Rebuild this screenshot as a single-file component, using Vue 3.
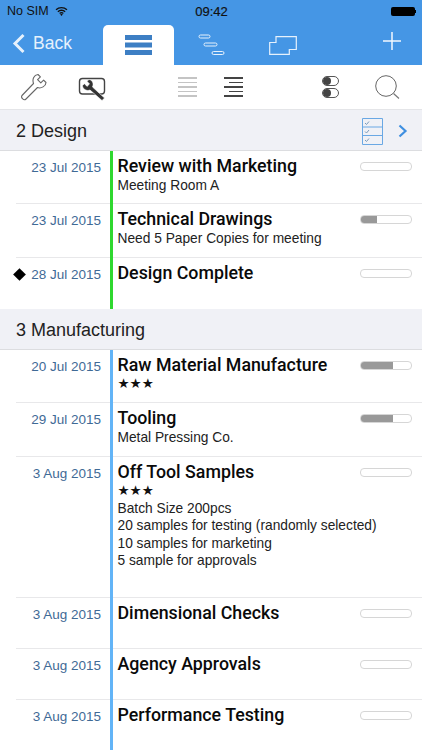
<script setup>
// 섹션별 작업 목록
const sections = [
  {
    title: '2 Design',
    color: 'green',
    showTools: true,
    tasks: [
      { date: '23 Jul 2015', name: 'Review with Marketing', lines: ['Meeting Room A'], progress: 0, height: 53 },
      { date: '23 Jul 2015', name: 'Technical Drawings', lines: ['Need 5 Paper Copies for meeting'], progress: 32, height: 54 },
      { date: '28 Jul 2015', name: 'Design Complete', lines: [], progress: 0, height: 51, milestone: true },
    ],
  },
  {
    title: '3 Manufacturing',
    color: 'blue',
    tasks: [
      { date: '20 Jul 2015', name: 'Raw Material Manufacture', stars: true, lines: [], progress: 63, height: 53 },
      { date: '29 Jul 2015', name: 'Tooling', lines: ['Metal Pressing Co.'], progress: 63, height: 54 },
      {
        date: '3 Aug 2015',
        name: 'Off Tool Samples',
        stars: true,
        lines: ['Batch Size 200pcs', '20 samples for testing (randomly selected)', '10 samples for marketing', '5 sample for approvals'],
        progress: 0,
        height: 141,
      },
      { date: '3 Aug 2015', name: 'Dimensional Checks', lines: [], progress: 0, height: 51 },
      { date: '3 Aug 2015', name: 'Agency Approvals', lines: [], progress: 0, height: 51 },
      { date: '3 Aug 2015', name: 'Performance Testing', lines: [], progress: 0, height: 51 },
    ],
  },
];
</script>

<template>
  <div class="screen">
    <header class="top">
      <div class="status">
        <div class="status-left">
          <span>No SIM</span>
          <svg width="13" height="10" viewBox="0 0 14 11">
            <path d="M1 4.2a8.5 8.5 0 0 1 12 0M3 6.3a5.600 5.600 0 0 1 8 0M5 8.200a2.800 2.800 0 0 1 4 0" fill="none" stroke="#111" stroke-width="1.500" />
            <path d="M7 11 5.600 9.300a2 2 0 0 1 2.800 0z" fill="#111" />
          </svg>
        </div>
        <span class="time">09:42</span>
        <div class="battery"><i></i><b></b></div>
      </div>

      <nav class="nav">
        <div class="back">
          <svg width="14" height="21" viewBox="0 0 14 21">
            <path d="M11.500 2 3 10.500l8.500 8.500" fill="none" stroke="#e6f1fc" stroke-width="3" />
          </svg>
          <span>Back</span>
        </div>
        <div class="tab">
          <svg width="27" height="20" viewBox="0 0 27 20">
            <path d="M0 0h27v5H0zM0 7.500h27v5H0zM0 15h27v5H0z" fill="#3d7fc4" />
          </svg>
        </div>
        <div class="nav-icon gantt">
          <svg width="28" height="22" viewBox="0 0 28 22">
            <g fill="none" stroke="#e6f1fc" stroke-width="1">
              <rect x="1" y="1" width="11" height="3" rx="1.500" />
              <rect x="6" y="9" width="13" height="3" rx="1.500" />
              <rect x="14" y="17.500" width="12" height="3" rx="1.500" />
            </g>
          </svg>
        </div>
        <div class="nav-icon cards">
          <svg width="28" height="19" viewBox="0 0 28 19">
            <path d="M.7 6.500h6.300V.7h20.300v12.800h-7v4.800H.7z" fill="none" stroke="#e6f1fc" stroke-width="1.200" />
          </svg>
        </div>
        <div class="plus">
          <svg width="18" height="18" viewBox="0 0 18 18">
            <path d="M9 0v18M0 9h18" stroke="#f2f8fe" stroke-width="1.500" />
          </svg>
        </div>
      </nav>
    </header>

    <div class="toolbar">
      <svg class="wrench" width="28" height="28" viewBox="0 0 28 28">
        <path d="M18 1.500 20.400 3.900 17.600 6.700 20.800 9.900 23.600 7.100 26 9.500C26 13 21 16 17.500 14.500L6 26C4 28 .5 25 2 22.500L13.500 10.500C12 6 14 2 18 1.500z" fill="#fff" stroke="#666" stroke-width="1.100" stroke-linejoin="round" />
      </svg>
      <svg class="wrench-box" width="28" height="24" viewBox="0 0 28 24">
        <rect x="1.500" y="1.500" width="25" height="15.500" rx="3" fill="#fff" stroke="#444" stroke-width="1.400" />
        <path d="M11 2.500 9 4.300 11.500 7 9 9.400 6.500 6.700 4.500 8.500C4.500 12 8.500 14.500 12 13L24 23.500 26.500 21 14.500 10C16 6.500 14.500 3 11 2.500z" fill="#333" stroke="#fff" stroke-width=".6" />
      </svg>
      <div class="align-left">
        <i v-for="n in 5" :key="n"></i>
      </div>
      <div class="align-right">
        <i v-for="n in 5" :key="n"></i>
      </div>
      <div class="switches">
        <span class="switch"><i></i></span>
        <span class="switch"><i></i></span>
      </div>
      <svg class="search" width="25" height="25" viewBox="0 0 25 25">
        <circle cx="11" cy="11" r="10.300" fill="none" stroke="#666" stroke-width="1" />
        <path d="m18.500 18.500 5.500 5" stroke="#777" stroke-width="1.200" />
      </svg>
    </div>

    <section v-for="section in sections" :key="section.title">
      <div class="section-head">
        <span>{{ section.title }}</span>
        <div v-if="section.showTools" class="section-tools">
          <svg width="21" height="27" viewBox="0 0 21 27">
            <path d="M.5.500h20v26H.5zM.5 9h20M.5 17.500h20" fill="#f0f1f6" stroke="#6aa8e4" stroke-width="1" />
            <path d="m3 5 1.500 1.500L7 3.500M3 13.500 4.500 15 7 12M3 22l1.500 1.500L7 20.500" fill="none" stroke="#7a9cbd" stroke-width="1" />
          </svg>
          <svg width="10" height="14" viewBox="0 0 10 14">
            <path d="M1.500 1.500 7.500 7l-6 5.500" fill="none" stroke="#3f8fe0" stroke-width="2.200" />
          </svg>
        </div>
      </div>

      <div class="tasks" :class="section.color">
        <div
          v-for="task in section.tasks"
          :key="task.name"
          class="task"
          :style="{ height: task.height + 'px' }"
        >
          <div class="date">
            <span v-if="task.milestone" class="diamond"></span>
            {{ task.date }}
          </div>
          <div class="body">
            <div class="name">{{ task.name }}</div>
            <div v-if="task.stars" class="stars">★★★</div>
            <div v-for="line in task.lines" :key="line" class="note">{{ line }}</div>
          </div>
          <div class="progress">
            <i :style="{ width: task.progress + '%' }"></i>
          </div>
        </div>
      </div>
    </section>
  </div>
</template>

<style>
html,
body {
  margin: 0;
  background: #fff;
}
</style>

<style scoped>
.screen {
  position: relative;
  width: 422px;
  height: 750px;
  overflow: hidden;
  background: #fff;
  color: #111;
  font-family: "Liberation Sans", Arial, sans-serif;
}

.top {
  height: 65px;
  background: #4596e5;
}

.status {
  display: flex;
  align-items: center;
  justify-content: space-between;
  height: 22px;
  padding: 0 6px 0 7px;
  font-size: 12.500px;
  color: #111;
}

.status-left {
  display: flex;
  align-items: center;
  gap: 6px;
  width: 100px;
}

.time {
  font-size: 13px;
  -webkit-text-stroke: .2px #111;
}

.battery {
  display: flex;
  align-items: center;
  justify-content: flex-end;
  width: 100px;
}

.battery i {
  width: 24px;
  height: 9px;
  background: #000;
  border-radius: 2px;
}

.battery b {
  width: 1px;
  height: 3px;
  background: #000;
}

.nav {
  display: flex;
  align-items: flex-end;
  height: 43px;
}

.back {
  display: flex;
  align-items: center;
  gap: 7px;
  width: 103px;
  height: 43px;
  padding: 0 0 0 12px;
  box-sizing: border-box;
  color: #e6f1fc;
  font-size: 17.500px;
}

.tab {
  display: flex;
  align-items: center;
  justify-content: center;
  width: 71px;
  height: 40px;
  background: #fff;
  border-radius: 5px 5px 0 0;
}

.nav-icon {
  display: flex;
  align-items: center;
  height: 37px;
}

.gantt {
  margin: 0 0 2px 24px;
}

.cards {
  margin: 0 0 1px 43px;
}

.plus {
  display: flex;
  align-items: center;
  height: 43px;
  margin: 0 21px 3px auto;
}

.toolbar {
  display: flex;
  align-items: center;
  height: 44px;
  border-bottom: 1px solid #e4e5e8;
}

.wrench {
  margin-left: 20px;
}

.wrench-box {
  margin: 4px 0 0 30px;
}

.align-left,
.align-right {
  display: flex;
  flex-direction: column;
  gap: 3.200px;
  width: 19px;
}

.align-left {
  margin-left: 72px;
}

.align-left i {
  height: 1.300px;
  background: #c4c4c4;
}

.align-right {
  margin-left: 27px;
  align-items: flex-end;
}

.align-right i {
  width: 19px;
  height: 1.300px;
  background: #444;
}

.align-right i:nth-child(even) {
  width: 14px;
}

.switches {
  display: flex;
  flex-direction: column;
  gap: 2px;
  margin-left: 79px;
}

.switch {
  display: block;
  position: relative;
  box-sizing: border-box;
  width: 17px;
  height: 10px;
  border: 1px solid #555;
  border-radius: 5px;
}

.switch i {
  position: absolute;
  left: 0;
  top: 0;
  width: 8px;
  height: 8px;
  border-radius: 50%;
  background: #444;
}

.search {
  margin-left: 36px;
}

.section-head {
  display: flex;
  align-items: center;
  justify-content: space-between;
  height: 38px;
  padding: 2px 14px 0 16px;
  background: #f0f1f6;
  border-bottom: 1px solid #dcdde0;
  font-size: 18px;
  color: #222;
}

.section-tools {
  display: flex;
  align-items: center;
  gap: 15px;
}

.tasks {
  position: relative;
}

/* 세로 타임라인 선 */
.tasks::before {
  content: "";
  position: absolute;
  left: 110px;
  top: 0;
  bottom: 0;
  width: 2.500px;
}

.green::before {
  background: #2fd82f;
}

.blue::before {
  background: #62b4f7;
}

.task {
  display: flex;
  box-sizing: border-box;
  margin-left: 16px;
  padding-top: 4px;
  border-bottom: 1px solid #e8e8ea;
}

.task:last-child {
  border-bottom: none;
}

.date {
  display: flex;
  align-items: center;
  justify-content: flex-end;
  width: 85px;
  height: 21px;
  margin-top: 2px;
  color: #3f6a96;
  font-size: 13.500px;
  white-space: pre;
}

.diamond {
  position: absolute;
  left: 14.500px;
  width: 9px;
  height: 9px;
  background: #000;
  transform: rotate(45deg);
}

.body {
  flex: 1;
  min-width: 0;
  margin-left: 16.500px;
  white-space: nowrap;
}

.name {
  font-family: Roboto, "Liberation Sans", sans-serif;
  font-size: 17.800px;
  font-weight: 500;
  line-height: 21px;
  color: #0a0a0a;
}

.stars {
  margin-top: -1px;
  font-family: "DejaVu Sans", sans-serif;
  font-size: 13.500px;
  line-height: 19px;
}

.name + .note {
  margin-top: 1px;
}

.note {
  font-size: 13.750px;
  line-height: 17.300px;
  color: #222;
}

.progress {
  flex: none;
  box-sizing: border-box;
  width: 52px;
  height: 9px;
  margin: 7px 10px 0 0;
  border: 1px solid #d6d6d6;
  border-radius: 4px;
  overflow: hidden;
}

.progress i {
  display: block;
  height: 100%;
  background: #999;
}
</style>
